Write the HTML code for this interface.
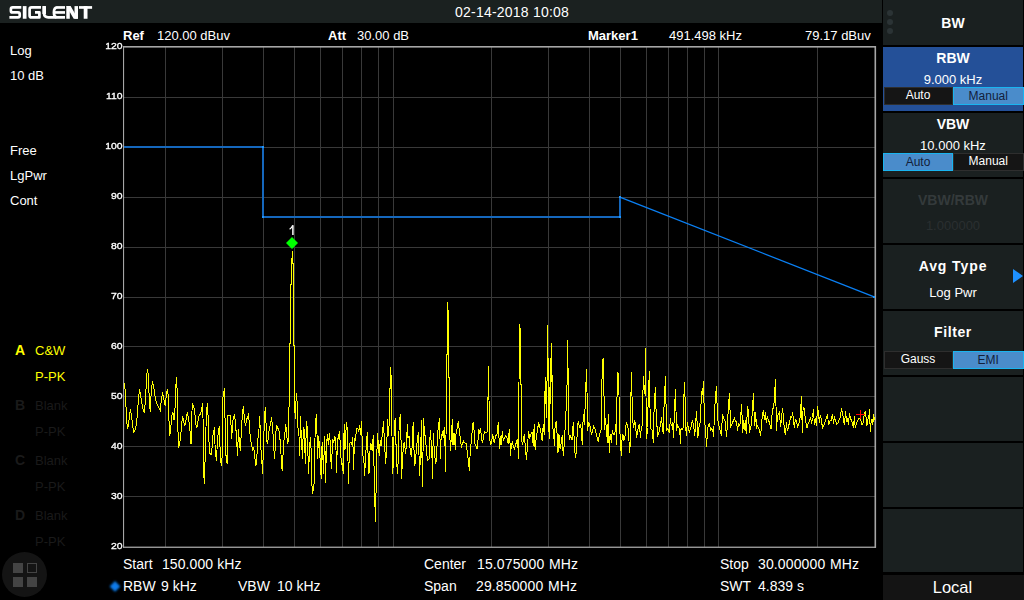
<!DOCTYPE html>
<html><head><meta charset="utf-8"><title>SIGLENT</title>
<style>
html,body{margin:0;padding:0;background:#000;}
body{width:1024px;height:600px;overflow:hidden;position:relative;font-family:"Liberation Sans",sans-serif;color:#fff;}
.abs{position:absolute;white-space:nowrap;}
#hdr{position:absolute;left:0;top:0;width:882px;height:23px;background:#1b2120;}
.t13{position:absolute;white-space:nowrap;font-size:13px;line-height:15px;color:#fff;}
.t14{position:absolute;white-space:nowrap;font-size:14px;line-height:16px;color:#fff;}
.w{letter-spacing:0.13px;word-spacing:0.6px;}
.b{font-weight:bold;}
.yl{position:absolute;left:90px;width:32.5px;text-align:right;font-size:10px;line-height:12px;color:#fff;-webkit-text-stroke:0.35px #fff;transform:scale(1.04,0.96);transform-origin:100% 82%;}
.dim{color:#1a1a1a;}
.yel{color:#ffff00;}
#panel{position:absolute;left:883px;top:0;width:141px;height:600px;background:#000;}
.btn{position:absolute;left:0;width:140px;height:63.5px;background:#1a2020;}
.btn .h{position:absolute;left:0;width:140px;text-align:center;font-weight:bold;font-size:14px;line-height:18px;color:#fff;top:1.5px;}
.btn .v{position:absolute;left:0;width:140px;text-align:center;font-size:13px;line-height:15px;color:#fff;top:25px;}
.tg{position:absolute;height:17.5px;font-size:12px;line-height:15.5px;text-align:center;box-sizing:border-box;}
.tg.off{left:0.5px;width:69px;background:#151515;border:1px solid #2e2e2e;color:#fff;}
.tg.on{background:#4a8ccb;border:1px solid #19b4f0;color:#13203a;padding-top:1px;}
</style></head><body>
<div id="hdr"></div>
<svg class="abs" style="left:0;top:0" width="100" height="23" viewBox="0 0 100 23">
<g fill="none" stroke="#fff" stroke-width="2.7" stroke-linejoin="round">
<path d="M21.3 7.45 H12.6 Q10.9 7.45 10.9 9.1 V10.9 Q10.9 12.45 12.6 12.45 H18 Q19.7 12.45 19.7 14.1 V15.8 Q19.7 17.4 18 17.4 H9.4"/>
<path d="M41 7.45 H31.6 Q29.6 7.45 29.6 9.4 V15.4 Q29.6 17.4 31.6 17.4 H39.4 V12.45 H35"/>
<path d="M44.1 6.1 V13.6 Q44.1 17.4 48.3 17.4 H65"/>
<path d="M56.8 7.45 H65"/>
<path d="M57.2 7.45 Q53.9 7.7 53.9 12.45 Q53.9 16.6 56.5 17.4"/>
<path d="M54.3 12.45 H65"/>
<path d="M79 7.45 H92.1"/>
</g>
<g fill="#fff">
<rect x="22.8" y="6.1" width="3.7" height="12.65"/>
<rect x="42.4" y="6.1" width="3.6" height="8"/>
<rect x="66.3" y="6.1" width="3.5" height="12.65"/>
<rect x="74.5" y="6.1" width="3.5" height="12.65"/>
<path d="M66.3 6.1 H70.6 L78 18.75 H73.7 Z"/>
<rect x="83.7" y="6.1" width="3.8" height="12.65"/>
</g></svg>
<div class="t14" style="left:455px;top:4px;letter-spacing:0.22px">02-14-2018 10:08</div>

<div class="t13 b" style="left:123px;top:28px">Ref</div>
<div class="t13" style="left:157px;top:28px">120.00 dBuv</div>
<div class="t13 b" style="left:328px;top:28px">Att</div>
<div class="t13" style="left:357px;top:28px">30.00 dB</div>
<div class="t13 b" style="left:588px;top:28px">Marker1</div>
<div class="t13" style="left:669px;top:28px">491.498 kHz</div>
<div class="t13" style="left:805px;top:28px">79.17 dBuv</div>

<div class="t13" style="left:10px;top:43px">Log</div>
<div class="t13" style="left:10px;top:68px">10 dB</div>
<div class="t13" style="left:10px;top:143px">Free</div>
<div class="t13" style="left:10px;top:168px">LgPwr</div>
<div class="t13" style="left:10px;top:193px">Cont</div>

<div class="t13 b yel" style="left:15px;top:342.5px;font-size:14px">A</div>
<div class="t13 yel" style="left:35px;top:343px">C&amp;W</div>
<div class="t13 yel" style="left:35px;top:369px">P-PK</div>
<div class="t13 b dim" style="left:15px;top:397.5px;font-size:14px">B</div>
<div class="t13 dim" style="left:35px;top:398px">Blank</div>
<div class="t13 dim" style="left:35px;top:424px">P-PK</div>
<div class="t13 b dim" style="left:15px;top:452.5px;font-size:14px">C</div>
<div class="t13 dim" style="left:35px;top:453px">Blank</div>
<div class="t13 dim" style="left:35px;top:479px">P-PK</div>
<div class="t13 b dim" style="left:15px;top:507.5px;font-size:14px">D</div>
<div class="t13 dim" style="left:35px;top:508px">Blank</div>
<div class="t13 dim" style="left:35px;top:534px">P-PK</div>

<div class="yl" style="top:540.1px">20</div><div class="yl" style="top:490.1px">30</div><div class="yl" style="top:440.1px">40</div><div class="yl" style="top:390.1px">50</div><div class="yl" style="top:340.1px">60</div><div class="yl" style="top:290.1px">70</div><div class="yl" style="top:240.1px">80</div><div class="yl" style="top:190.1px">90</div><div class="yl" style="top:140.1px">100</div><div class="yl" style="top:90.1px">110</div><div class="yl" style="top:40.1px">120</div>

<svg class="abs" style="left:0;top:0" width="883" height="600" viewBox="0 0 883 600">
<g shape-rendering="crispEdges"><rect x="165" y="47" width="1" height="500" fill="#393939"/><rect x="222" y="47" width="1" height="500" fill="#393939"/><rect x="263" y="47" width="1" height="500" fill="#393939"/><rect x="294" y="47" width="1" height="500" fill="#393939"/><rect x="320" y="47" width="1" height="500" fill="#393939"/><rect x="342" y="47" width="1" height="500" fill="#393939"/><rect x="361" y="47" width="1" height="500" fill="#393939"/><rect x="378" y="47" width="1" height="500" fill="#393939"/><rect x="393" y="47" width="1" height="500" fill="#393939"/><rect x="491" y="47" width="1" height="500" fill="#393939"/><rect x="548" y="47" width="1" height="500" fill="#393939"/><rect x="589" y="47" width="1" height="500" fill="#393939"/><rect x="620" y="47" width="1" height="500" fill="#393939"/><rect x="646" y="47" width="1" height="500" fill="#393939"/><rect x="668" y="47" width="1" height="500" fill="#393939"/><rect x="687" y="47" width="1" height="500" fill="#393939"/><rect x="704" y="47" width="1" height="500" fill="#393939"/><rect x="718" y="47" width="1" height="500" fill="#393939"/><rect x="817" y="47" width="1" height="500" fill="#393939"/><rect x="124" y="97" width="751" height="1" fill="#393939"/><rect x="124" y="147" width="751" height="1" fill="#393939"/><rect x="124" y="197" width="751" height="1" fill="#393939"/><rect x="124" y="247" width="751" height="1" fill="#393939"/><rect x="124" y="297" width="751" height="1" fill="#393939"/><rect x="124" y="346" width="751" height="1" fill="#393939"/><rect x="124" y="396" width="751" height="1" fill="#393939"/><rect x="124" y="446" width="751" height="1" fill="#393939"/><rect x="124" y="496" width="751" height="1" fill="#393939"/></g>
<rect x="123" y="46" width="753" height="1.6" fill="#a6a6a6"/>
<rect x="123" y="546.6" width="753" height="1.3" fill="#a6a6a6"/>
<rect x="123" y="46" width="1.1" height="501.9" fill="#a6a6a6"/>
<rect x="874.5" y="46" width="1.6" height="501.9" fill="#a6a6a6"/>
<g shape-rendering="crispEdges" fill="#1567bc"><rect x="124" y="146" width="140" height="2"/><rect x="262" y="146" width="2" height="72"/><rect x="262" y="216" width="359" height="2"/><rect x="619" y="196" width="2" height="22"/></g><line x1="620.5" y1="197.3" x2="873.5" y2="296.7" stroke="#0a80f5" stroke-width="1.25"/><g shape-rendering="crispEdges" fill="#1e96ff"><rect x="262" y="146" width="2" height="2"/><rect x="262" y="216" width="2" height="2"/><rect x="619" y="216" width="2" height="2"/><rect x="619" y="196" width="2" height="2"/><rect x="873" y="296" width="2" height="2"/></g>
<polyline points="124.50,383.00 125.60,395.00 126.30,415.00 127.50,429.40 128.50,424.00 130.40,408.75 131.90,418.75 133.50,432.50 135.60,428.75 136.90,420.00 137.90,406.00 139.40,389.40 141.25,398.75 142.50,407.50 144.40,412.50 145.60,398.75 146.50,377.50 147.50,369.40 148.50,376.00 149.40,405.00 150.40,411.90 151.25,390.00 152.50,381.25 153.75,387.50 155.00,396.00 156.25,402.50 158.00,406.00 160.25,410.60 161.50,398.75 162.50,392.50 163.75,398.75 165.25,406.00 166.25,395.00 167.50,389.40 168.50,398.75 169.00,421.00 169.75,436.25 171.00,425.00 171.90,415.00 173.00,412.50 174.00,420.00 175.00,408.75 175.60,388.75 176.50,377.50 177.25,392.50 177.75,426.00 178.75,447.50 180.60,437.50 181.50,426.00 182.50,416.00 183.50,420.00 184.40,425.00 185.60,423.75 186.50,415.00 187.50,413.00 188.50,418.75 189.40,425.00 190.25,433.75 191.00,444.40 191.50,425.00 192.25,403.75 193.75,406.00 195.00,415.00 196.25,427.50 196.90,428.00 197.50,423.75 198.75,416.00 200.60,414.00 201.90,407.50 202.50,403.00 203.00,417.50 203.50,470.00 204.40,484.40 205.60,440.00 206.25,418.75 207.25,403.00 208.00,415.00 208.75,438.75 210.00,453.75 211.25,454.40 212.50,443.75 213.00,435.00 214.40,427.50 215.25,451.25 216.50,461.25 217.50,438.75 218.75,430.00 219.40,425.60 220.40,460.00 221.50,465.60 222.50,451.25 223.00,397.50 224.40,388.00 225.00,417.50 225.60,452.50 227.25,464.40 227.75,440.00 228.00,415.60 230.00,415.00 231.25,427.50 231.60,438.75 233.00,420.00 234.40,414.40 235.60,423.75 236.90,445.00 237.50,456.25 238.50,428.75 239.40,443.75 240.40,450.60 241.50,427.50 242.50,412.50 243.50,406.25 244.40,420.00 245.60,425.60 246.90,418.75 248.00,416.00 248.38,413.50 249.25,421.88 250.25,437.50 251.50,445.00 252.75,450.00 253.75,447.50 254.62,455.00 255.50,463.12 255.90,466.25 257.12,452.50 257.75,439.38 258.75,435.00 259.50,416.25 260.25,428.75 260.88,450.00 261.50,451.25 262.12,466.25 262.50,474.40 263.75,438.75 264.62,413.75 265.50,407.50 266.00,422.50 266.50,438.75 267.50,444.38 268.38,436.25 269.38,427.50 270.50,425.00 271.50,417.50 272.50,426.25 273.38,438.75 274.00,451.25 274.40,459.40 275.25,447.50 275.88,432.50 276.75,424.75 277.75,428.12 278.75,429.38 279.62,435.00 280.50,445.00 281.25,458.75 282.10,470.60 283.00,455.00 284.00,440.00 285.00,432.50 285.62,424.38 286.50,431.25 287.50,444.38 288.38,440.00 288.75,411.25 289.50,400.00 289.50,343.00 290.50,343.00 290.50,284.00 291.50,284.00 291.50,258.50 292.50,258.50 292.50,251.00 292.50,263.00 293.50,263.00 293.50,345.00 294.50,345.00 294.50,395.00 295.20,418.75 296.40,393.00 297.50,407.50 298.00,427.50 299.00,436.25 299.62,456.25 300.50,416.25 301.25,436.25 302.50,459.40 302.75,445.00 303.50,427.50 304.50,431.25 305.25,463.75 305.88,442.50 306.50,420.62 307.50,431.25 308.40,474.40 309.62,450.00 310.25,437.50 310.88,447.50 311.50,448.75 311.50,478.00 312.50,494.40 314.00,485.00 314.62,458.75 315.25,425.00 316.50,414.38 317.12,438.75 317.50,459.40 318.62,435.62 319.38,445.00 320.25,463.12 321.25,478.75 322.12,442.50 323.00,460.00 323.40,473.75 324.62,435.62 325.25,460.00 325.50,482.50 326.50,445.00 327.50,434.38 328.38,445.00 329.38,433.50 330.25,442.50 330.88,460.00 331.50,468.75 332.12,451.25 332.75,439.38 333.75,442.50 334.62,436.25 335.50,438.75 336.25,456.25 336.50,472.50 337.50,438.75 338.38,438.12 339.62,430.62 340.25,446.25 341.50,465.00 342.12,463.12 343.40,473.75 343.38,448.75 344.38,424.38 345.00,450.00 345.50,437.50 346.50,422.25 347.50,431.25 348.00,461.25 348.40,483.75 349.62,443.75 350.88,441.88 351.75,445.00 352.50,437.50 353.38,453.75 353.40,470.00 354.62,438.75 355.50,440.00 356.50,428.12 357.75,428.75 358.75,431.25 359.62,425.00 360.50,435.00 361.50,421.25 362.12,438.75 362.75,455.00 363.75,457.50 364.60,475.60 365.88,452.50 366.50,440.00 367.50,432.25 368.00,452.50 369.00,473.75 370.25,445.00 370.88,443.12 372.00,450.00 372.38,450.00 373.25,435.00 374.40,481.00 375.40,521.90 376.30,480.00 377.38,433.12 378.25,442.50 379.25,455.62 380.25,440.00 381.12,446.25 382.00,437.50 382.75,430.00 383.62,421.25 384.25,440.00 385.25,456.25 385.50,464.40 386.75,450.00 387.38,418.75 388.25,436.25 389.25,422.50 389.50,388.00 390.50,388.00 390.50,367.00 391.50,383.00 392.00,436.25 392.60,473.50 393.62,461.25 394.25,422.50 395.50,418.50 396.12,450.00 397.40,473.50 398.25,460.00 399.25,421.25 400.50,414.38 401.12,445.00 401.50,478.75 402.75,455.00 403.62,444.38 404.50,441.88 405.50,453.75 406.50,443.75 407.38,424.38 408.00,437.50 409.00,436.25 409.88,446.25 410.75,455.00 411.75,456.25 412.38,437.50 413.25,422.25 414.00,450.00 414.50,466.25 415.50,461.25 416.50,447.50 417.38,440.00 418.38,432.50 419.00,455.00 419.50,475.60 420.50,455.00 421.50,420.00 422.40,486.90 423.00,452.50 423.62,418.50 424.50,435.00 425.50,436.25 426.50,453.75 427.75,460.00 429.25,458.75 430.25,430.00 431.12,441.25 432.38,465.00 432.40,478.75 433.25,433.12 434.25,450.00 435.50,463.00 436.50,461.25 437.38,435.62 438.62,425.00 439.50,418.50 440.50,458.75 441.12,436.25 442.38,433.12 443.25,437.50 444.25,427.50 445.25,452.50 445.50,471.90 446.50,400.00 446.50,354.00 447.50,354.00 447.50,302.00 448.50,318.00 448.50,377.00 449.50,377.00 449.50,400.00 449.88,436.25 450.50,451.25 451.50,433.75 452.38,419.38 453.00,445.00 454.00,433.12 455.50,450.00 456.12,430.00 457.38,428.75 458.25,421.25 459.88,435.00 461.50,447.50 462.38,443.75 463.62,441.25 464.88,443.12 466.12,443.75 467.38,452.50 468.62,463.75 469.50,470.60 470.25,450.00 471.50,440.62 472.38,426.88 473.25,422.25 474.25,432.50 474.88,443.75 476.12,446.25 477.38,449.38 478.00,440.00 478.62,429.38 479.50,432.50 480.50,428.50 481.50,437.50 482.38,443.12 483.62,436.25 484.50,431.88 486.12,433.12 487.38,431.25 488.00,398.00 488.40,366.00 489.00,400.00 489.88,440.00 490.75,445.00 491.75,441.25 492.75,434.38 494.25,443.12 495.50,436.25 497.25,433.75 498.25,422.25 498.88,436.25 499.75,448.75 500.75,436.25 501.38,445.00 502.25,431.25 503.25,440.62 504.50,438.12 505.50,435.62 507.00,437.50 508.25,443.75 509.25,429.38 510.12,445.00 510.50,455.62 511.38,445.00 512.25,441.88 513.50,446.88 514.50,448.75 515.50,445.00 516.38,442.50 517.62,438.75 518.50,459.38 518.70,389.00 519.00,384.00 519.30,330.00 519.40,324.30 520.30,330.00 520.50,384.00 521.30,384.00 521.40,395.00 521.38,438.12 522.62,445.00 524.25,434.38 525.12,444.38 526.38,460.00 527.62,445.00 528.50,430.62 529.50,437.50 530.75,435.00 532.00,431.88 533.25,445.62 534.25,424.38 535.12,450.00 536.38,436.25 537.62,430.00 538.50,422.25 540.12,428.12 541.38,435.00 542.25,441.25 543.25,423.75 544.25,435.00 544.50,406.25 545.50,377.00 545.75,395.00 546.40,418.00 547.20,370.00 547.60,325.00 548.20,372.00 548.50,424.00 549.50,439.00 550.30,358.00 550.80,404.00 551.40,343.00 552.20,384.00 552.60,425.00 553.88,437.50 554.50,446.25 555.12,424.38 556.38,420.62 557.00,432.50 558.00,452.50 558.88,433.75 560.12,448.75 561.38,442.50 562.25,435.00 563.25,455.62 564.25,445.00 564.88,431.25 565.75,421.25 566.60,388.00 567.20,383.00 567.50,340.00 568.30,383.00 568.50,395.00 568.50,431.25 569.50,439.38 570.75,436.25 572.00,440.00 573.25,422.25 573.88,432.50 574.50,448.75 575.50,457.50 576.38,451.25 577.25,431.25 578.25,420.62 579.50,427.50 580.50,424.38 581.38,430.00 582.25,445.00 583.25,414.38 584.25,425.00 585.50,398.75 586.40,369.00 587.25,401.25 587.62,431.25 588.50,421.88 590.12,426.25 591.38,433.75 592.62,431.25 593.50,426.25 595.12,429.38 596.38,435.00 598.25,441.88 599.50,433.75 601.00,430.62 601.80,394.00 602.30,360.40 603.30,358.00 603.80,394.00 604.50,400.00 604.50,430.00 605.50,418.12 606.75,435.00 607.62,442.50 608.25,413.75 609.25,453.12 610.12,433.75 611.38,442.50 612.25,430.62 613.88,435.00 615.12,431.25 615.75,423.75 616.38,445.00 616.75,407.50 617.60,372.00 618.50,374.00 619.00,395.00 619.50,428.12 619.75,428.75 620.75,447.50 621.38,455.62 622.25,433.75 623.25,441.25 623.75,435.00 624.75,440.00 625.75,426.25 626.62,422.25 627.50,426.25 628.50,430.00 629.50,452.50 630.38,442.50 630.75,402.50 631.50,372.00 632.00,396.25 632.88,422.50 633.75,427.50 634.50,420.00 635.38,423.75 636.62,438.12 637.50,431.25 638.50,426.88 639.50,424.38 640.38,437.50 641.00,431.25 642.00,426.88 642.62,401.25 643.50,376.00 644.50,393.00 645.50,393.00 645.50,348.50 645.90,393.00 646.00,395.62 646.62,438.75 647.50,427.50 648.25,397.50 649.40,371.25 649.75,401.25 650.75,428.75 652.25,430.00 653.25,442.50 653.50,425.62 654.50,398.75 655.50,387.25 655.75,408.75 656.62,410.00 657.25,436.25 658.50,434.38 659.75,428.75 660.75,422.50 661.62,417.25 662.50,430.00 663.50,434.38 664.12,402.50 665.50,376.25 666.00,403.75 666.62,430.00 667.88,428.75 669.50,433.12 670.38,418.12 671.25,425.62 672.50,423.12 673.50,437.50 674.50,409.38 675.50,389.00 676.00,411.25 676.62,430.62 677.50,423.75 678.50,427.50 679.75,428.75 680.38,443.75 681.00,428.75 682.25,429.38 683.25,427.50 683.50,406.25 684.50,382.25 685.38,407.50 686.00,431.25 686.62,435.62 687.25,422.25 688.25,427.50 689.50,432.50 690.38,427.50 691.38,426.88 692.25,420.00 693.50,425.00 694.75,435.62 695.75,421.25 696.62,411.25 697.25,426.88 697.88,437.50 699.12,426.25 700.00,423.12 700.75,410.00 701.60,391.25 702.50,395.00 703.50,381.25 703.50,402.50 704.50,403.75 705.00,425.00 706.00,437.50 706.62,446.88 707.50,430.00 708.50,424.38 709.50,423.75 710.38,430.00 711.62,428.75 712.88,431.25 713.50,436.88 714.50,415.00 715.38,396.88 716.50,386.25 717.00,402.50 717.88,420.00 719.12,426.25 720.38,431.25 721.62,435.62 722.25,415.00 723.25,416.88 724.50,420.00 725.38,421.25 726.38,436.88 727.25,427.50 728.25,410.00 729.38,393.12 730.00,410.00 730.75,426.25 732.25,423.75 733.50,420.00 734.50,418.12 735.38,421.88 736.62,421.25 737.50,431.25 738.50,423.12 739.75,426.25 740.75,416.25 741.50,404.38 742.25,420.00 742.75,432.50 743.75,420.00 744.38,430.00 745.25,420.00 746.25,434.38 746.88,420.00 747.50,405.62 748.50,412.50 749.38,432.50 750.62,427.50 751.50,425.00 752.25,411.25 753.50,393.12 754.00,411.25 754.75,426.25 755.62,412.50 756.50,427.50 757.50,425.62 758.75,428.75 759.75,431.25 760.62,436.25 761.50,423.75 762.50,413.75 763.50,409.75 764.38,420.00 765.38,411.88 766.25,422.50 767.25,416.88 768.50,420.00 769.75,423.75 771.25,429.38 772.25,411.25 773.50,406.88 774.38,400.62 775.38,379.38 776.00,406.25 776.50,431.25 777.25,417.50 778.50,413.75 779.38,412.50 780.62,426.88 781.50,417.50 782.50,408.50 783.50,417.50 784.38,430.00 785.38,435.00 786.50,422.50 787.25,430.00 788.50,427.50 789.38,422.50 790.62,416.88 791.88,417.50 792.50,412.50 793.50,420.00 794.38,428.12 795.25,419.38 796.25,420.62 797.50,426.88 798.75,423.75 799.75,420.62 800.62,411.88 801.50,395.62 802.25,432.50 803.12,407.50 804.38,408.12 805.00,416.25 806.25,425.00 806.88,428.12 808.12,423.75 809.38,421.25 810.62,417.50 811.50,423.75 812.50,417.50 813.50,409.38 814.38,425.00 815.38,418.12 816.50,426.25 817.50,406.25 818.50,413.75 819.38,422.50 820.25,415.62 821.25,418.75 822.50,428.12 824.00,425.00 825.25,421.25 826.50,418.12 827.50,413.75 828.50,425.00 829.75,421.25 831.00,420.62 832.50,414.38 833.50,423.75 834.38,417.50 835.62,420.62 836.88,424.38 838.12,422.50 839.38,419.38 840.38,416.88 841.50,408.50 842.50,413.12 843.75,421.25 844.38,425.00 845.62,411.25 846.50,421.25 847.50,419.38 848.50,425.00 849.38,413.12 850.62,418.75 851.88,421.25 853.50,427.50 854.38,416.25 855.25,428.12 856.50,422.50 858.12,420.00 859.38,418.12 860.62,419.38 861.88,424.38 862.75,425.00 863.75,417.50 864.75,413.12 865.50,411.00 866.20,419.00 866.80,426.00 868.00,419.00 868.80,418.00 869.50,409.00 870.00,424.00 870.50,432.00 871.20,420.00 872.20,419.50 872.80,425.00 873.50,414.00 874.50,420.00" fill="none" stroke="#ffff00" stroke-width="1" shape-rendering="crispEdges" stroke-linejoin="miter"/>
<path d="M292 237 L298 243 L292 249 L286 243 Z" fill="#00ff00"/>
<path d="M856 414.5 H865 M860.5 410 V419" stroke="#ff0000" stroke-width="1" shape-rendering="crispEdges"/>
<defs><filter id="bl" x="-50%" y="-50%" width="200%" height="200%"><feGaussianBlur stdDeviation="0.9"/></filter></defs><path d="M115 581 L120.4 586.4 L115 591.8 L109.6 586.4 Z" fill="#0b7ceb" filter="url(#bl)"/>
</svg>
<svg class="abs" style="left:286px;top:222px" width="12" height="15" viewBox="286 222 12 15"><path d="M292.9 225.2 V235" stroke="#fff" stroke-width="1.5" fill="none"/><path d="M289.6 229.2 Q291.9 227.8 292.6 225.3" stroke="#fff" stroke-width="1.2" fill="none"/></svg>

<div class="t14" style="left:123px;top:556px">Start</div>
<div class="t14" style="left:162px;top:556px;letter-spacing:0.08px">150.000 kHz</div>
<div class="t14" style="left:123px;top:578px">RBW</div>
<div class="t14" style="left:161px;top:578px">9 kHz</div>
<div class="t14" style="left:238px;top:578px">VBW</div>
<div class="t14" style="left:277px;top:578px">10 kHz</div>
<div class="t14" style="left:424px;top:556px">Center</div>
<div class="t14" style="left:477px;top:556px"><span class="w">15.075000 MHz</span></div>
<div class="t14" style="left:424px;top:578px">Span</div>
<div class="t14" style="left:476px;top:578px"><span class="w">29.850000 MHz</span></div>
<div class="t14" style="left:720px;top:556px">Stop</div>
<div class="t14" style="left:758px;top:556px"><span class="w">30.000000 MHz</span></div>
<div class="t14" style="left:720px;top:578px">SWT</div>
<div class="t14" style="left:758px;top:578px">4.839 s</div>

<!-- bottom-left app icon -->
<div class="abs" style="left:2px;top:552px;width:45px;height:45px;border-radius:23px;background:#141414;"></div>
<div class="abs" style="left:13px;top:563px;width:10px;height:10px;background:#444;"></div>
<div class="abs" style="left:27px;top:563px;width:8px;height:8px;border:1px solid #444;"></div>
<div class="abs" style="left:13px;top:577px;width:10px;height:10px;background:#444;"></div>
<div class="abs" style="left:27px;top:577px;width:10px;height:10px;background:#444;"></div>

<div id="panel">
 <div class="btn" style="top:0;height:45px;"><div class="h" style="top:13.5px">BW</div>
  <div class="abs" style="left:3.5px;top:9.5px;width:6px;height:6px;border-radius:3px;background:#2b3335"></div>
  <div class="abs" style="left:3.5px;top:18.5px;width:6px;height:6px;border-radius:3px;background:#2b3335"></div>
  <div class="abs" style="left:3.5px;top:27.5px;width:6px;height:6px;border-radius:3px;background:#2b3335"></div>
 </div>
 <div class="btn" style="top:47px;background:#245098;"><div class="h">RBW</div><div class="v">9.000 kHz</div>
   <div class="tg off" style="top:40px">Auto</div><div class="tg on" style="top:40px;left:69.5px;width:71.5px">Manual</div></div>
 <div class="btn" style="top:113px;"><div class="h">VBW</div><div class="v">10.000 kHz</div>
   <div class="tg on" style="top:40px;left:0;width:70px">Auto</div><div class="tg off" style="top:40px;left:70px;width:70.5px">Manual</div></div>
 <div class="btn" style="top:179px;"><div class="h" style="color:#343a3b;top:12px">VBW/RBW</div><div class="v" style="color:#2a2f30;top:39px">1.000000</div></div>
 <div class="btn" style="top:245px;"><div class="h" style="top:12px;letter-spacing:0.9px">Avg Type</div><div class="v" style="top:40px">Log Pwr</div>
   <svg class="abs" style="left:129px;top:23px" width="12" height="16"><path d="M1 1 L11 8 L1 15 Z" fill="#1e90ff"/></svg></div>
 <div class="btn" style="top:311px;"><div class="h" style="top:12px;letter-spacing:0.6px">Filter</div>
   <div class="tg off" style="top:40px">Gauss</div><div class="tg on" style="top:40px;left:69.5px;width:71.5px">EMI</div></div>
 <div class="btn" style="top:377px;"></div>
 <div class="btn" style="top:443px;"></div>
 <div class="btn" style="top:509px;height:63px"></div>
 <div class="abs" style="left:0;top:575px;width:141px;height:25px;background:#141414;"><div style="width:139px;text-align:center;font-size:16.5px;line-height:25px;color:#fff;">Local</div></div>
</div>
</body></html>
